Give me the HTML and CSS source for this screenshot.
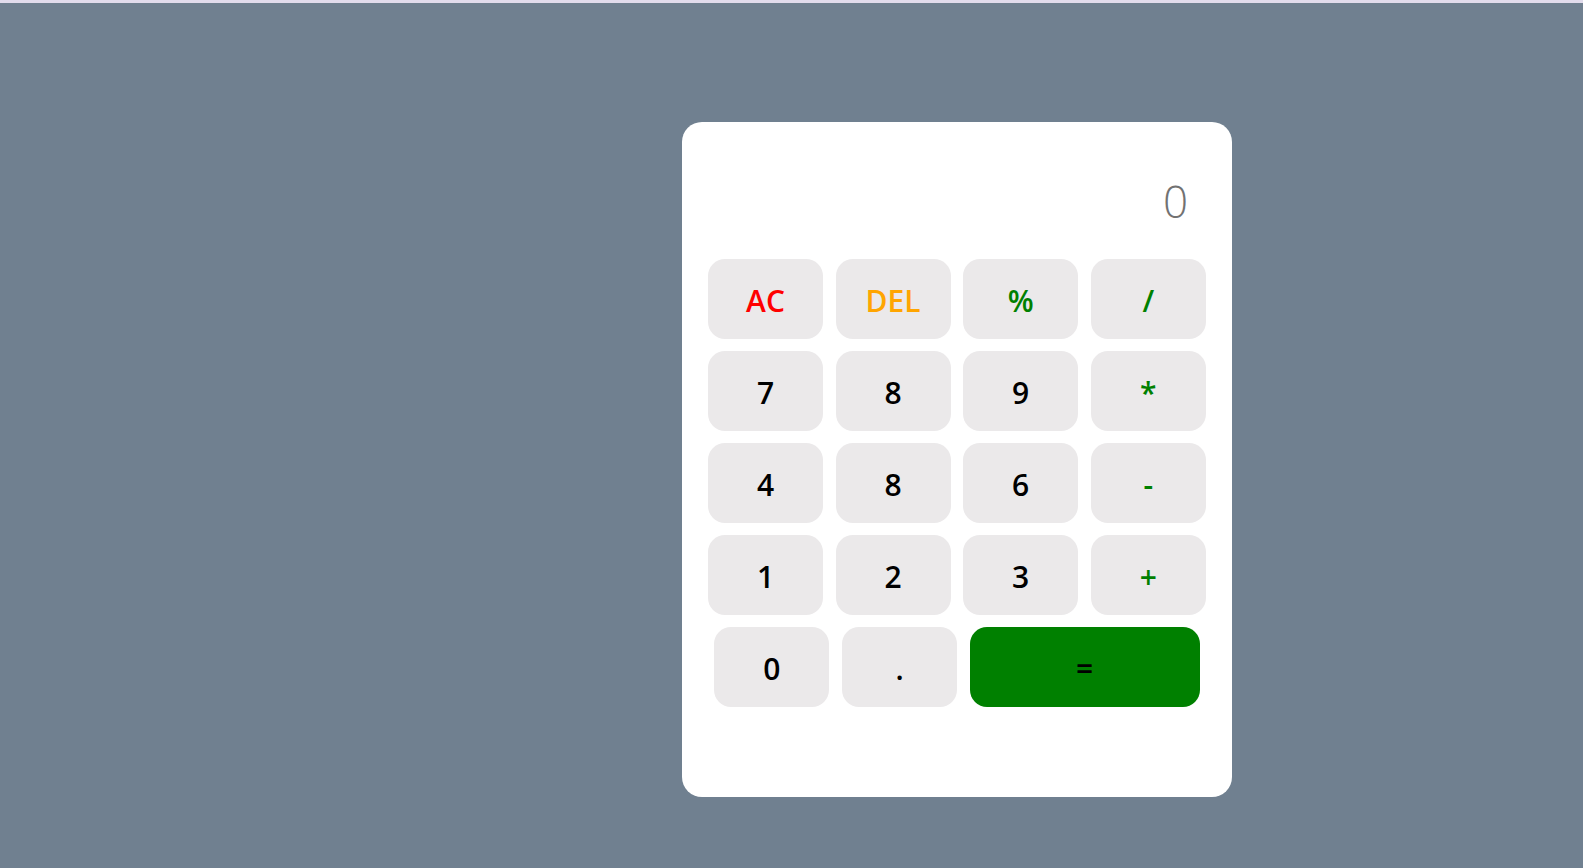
FILE: index.html
```html
<!DOCTYPE html>
<html lang="en">
<head>
<meta charset="UTF-8">
<title>Calculator</title>
<link rel="stylesheet" href="styles.css">
</head>
<body>
<div class="topbar"></div>
<main class="stage">
  <div class="calculator">
    <div class="display">0</div>
    <div class="keys">
      <button class="key key-clear">AC</button>
      <button class="key key-del">DEL</button>
      <button class="key key-op">%</button>
      <button class="key key-op">/</button>
      <button class="key">7</button>
      <button class="key">8</button>
      <button class="key">9</button>
      <button class="key key-op">*</button>
      <button class="key">4</button>
      <button class="key">8</button>
      <button class="key">6</button>
      <button class="key key-op">-</button>
      <button class="key">1</button>
      <button class="key">2</button>
      <button class="key">3</button>
      <button class="key key-op">+</button>
    </div>
    <div class="last-row">
      <button class="key">0</button>
      <button class="key">.</button>
      <button class="key key-equals">=</button>
    </div>
  </div>
</main>
</body>
</html>
```
FILE: styles.css
```css
html, body {
  margin: 0;
  padding: 0;
}

body {
  background: #708090;
  min-height: 100vh;
  font-family: "Open Sans", "Noto Sans", sans-serif;
}

.topbar {
  height: 3px;
  background: #e2dcec;
}

.stage {
  padding: 119px 0 0 682px;
}

.calculator {
  box-sizing: border-box;
  width: 550px;
  height: 675px;
  background: #ffffff;
  border-radius: 20px;
  padding: 0 25px 0 26px;
}

.display {
  padding: 49px 19px 0 0;
  height: 60px;
  line-height: 60px;
  text-align: right;
  font-size: 44px;
  font-weight: 300;
  color: #727272;
  margin-bottom: 28px;
}

.keys {
  display: grid;
  grid-template-columns: repeat(4, 115px);
  grid-auto-rows: 80px;
  column-gap: 12.6px;
  row-gap: 12px;
}

.last-row {
  display: flex;
  justify-content: center;
  gap: 12.6px;
  margin-top: 12px;
  padding-right: 1px;
}

.key {
  width: 115px;
  height: 80px;
  border: none;
  border-radius: 17px;
  background: #ebe9ea;
  font-family: "Open Sans", "Noto Sans", sans-serif;
  font-size: 30px;
  font-weight: 600;
  color: #000000;
  padding: 3px 0 0;
  cursor: pointer;
}

.key-clear {
  color: #ff0000;
}

.key-del {
  color: #ffa500;
}

.key-op {
  color: #008000;
}

.key-equals {
  width: 230px;
  background: #008000;
  color: #000000;
}
```
